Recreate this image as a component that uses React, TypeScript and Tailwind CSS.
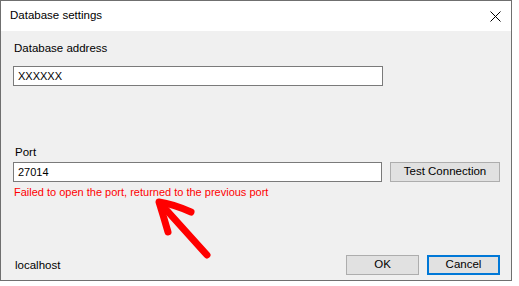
function TextBox({ value, className }: { value: string; className?: string }) {
  return (
    <div
      className={`flex h-[20px] items-center border border-[#7a7a7a] bg-white px-[4px] text-[11px] text-black ${className ?? ""}`}
    >
      {value}
    </div>
  );
}

function WinButton({
  label,
  isDefault,
  className,
}: {
  label: string;
  isDefault?: boolean;
  className?: string;
}) {
  return (
    <button
      className={`flex h-[20px] items-center justify-center bg-[#e1e1e1] text-[11.5px] text-black ${
        isDefault ? "border-2 border-[#0078d7]" : "border border-[#adadad]"
      } ${className ?? ""}`}
    >
      {label}
    </button>
  );
}

export default function App() {
  return (
    <div
      className="relative h-[286px] w-[519px] overflow-hidden bg-white"
      style={{ fontFamily: '"Liberation Sans", Arial, sans-serif' }}
    >
      {/* Window */}
      <div className="flex h-[281px] w-[512px] flex-col border border-[#6f6f6f]">
        {/* Title bar */}
        <div className="flex h-[30px] items-center justify-between bg-white pl-[9px] pr-[9px]">
          <span className="text-[11.5px] text-black">Database settings</span>
          <svg width="11" height="11" viewBox="0 0 11 11" className="mr-[1px]">
            <path d="M0.5 0.5 L10.5 10.5 M10.5 0.5 L0.5 10.5" stroke="#000" strokeWidth="1" />
          </svg>
        </div>

        {/* Body */}
        <div className="flex flex-1 flex-col bg-[#f0f0f0] pl-[12px] pr-[11px] pt-[10px] pb-[5px]">
          <div className="h-[15px] pl-[1px] text-[11.5px] leading-[15px] text-black">
            Database address
          </div>
          <TextBox value="XXXXXX" className="mt-[10px] w-[370px]" />

          <div className="mt-[59px] h-[15px] pl-[2px] text-[11.5px] leading-[15px] text-black">
            Port
          </div>
          <div className="mt-[2px] flex gap-[8px]">
            <TextBox value="27014" className="w-[369px] px-[3px]" />
            <WinButton label="Test Connection" className="w-[110px] h-[19px]" />
          </div>
          <div className="mt-[3px] h-[15px] pl-[1px] text-[11px] leading-[15px] text-[#ff0000]">
            Failed to open the port, returned to the previous port
          </div>

          <div className="mt-auto flex items-center justify-between">
            <span className="pl-[2px] pt-[1px] text-[11.5px] text-black">localhost</span>
            <div className="flex gap-[8px]">
              <WinButton label="OK" className="w-[73px]" />
              <WinButton label="Cancel" isDefault className="w-[73px]" />
            </div>
          </div>
        </div>
      </div>

      {/* Red annotation arrow */}
      <svg
        className="pointer-events-none absolute left-0 top-0"
        width="519"
        height="286"
        viewBox="0 0 519 286"
      >
        <g
          fill="none"
          stroke="#ff0000"
          strokeWidth="7"
          strokeLinecap="round"
          strokeLinejoin="round"
        >
          <path d="M207 255 L161 204" />
          <path d="M191 212 Q173 204 159 202 Q164 218 168 232" />
        </g>
      </svg>
    </div>
  );
}
